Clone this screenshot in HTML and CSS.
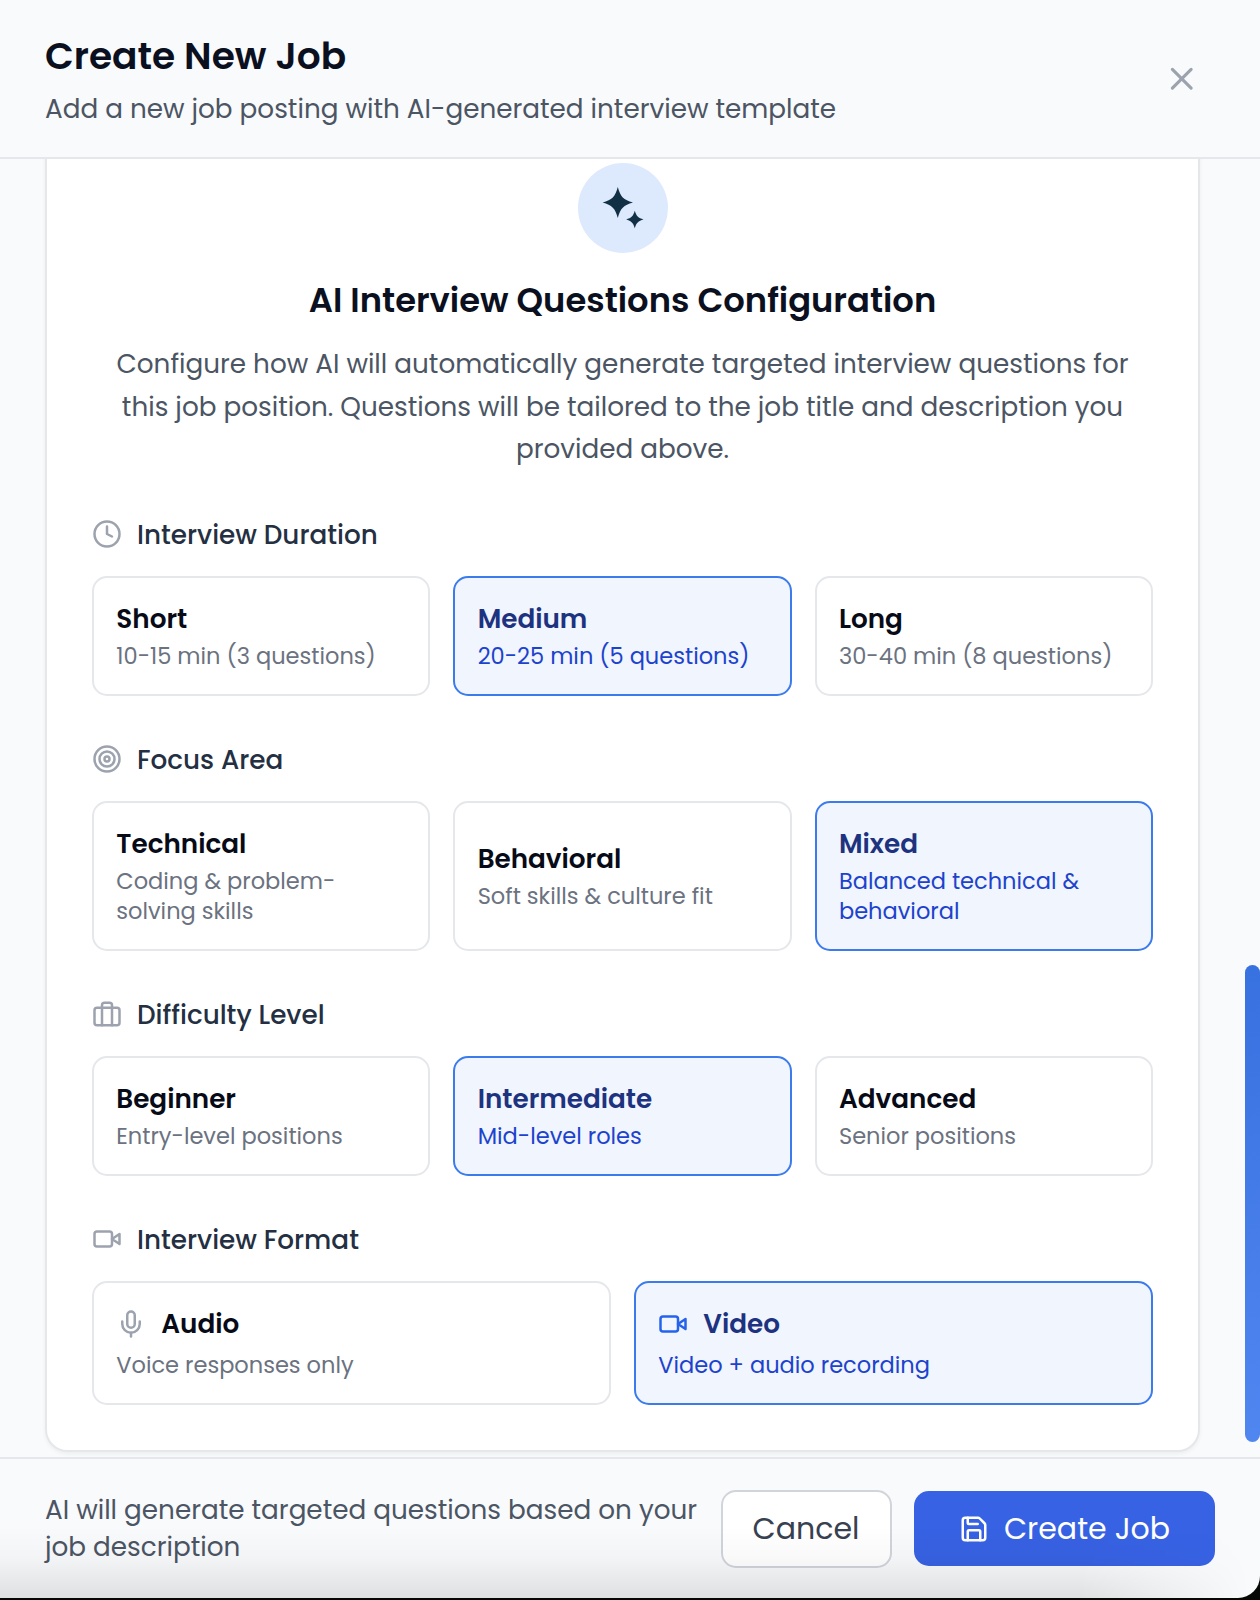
FILE: index.html
```html
<!DOCTYPE html>
<html lang="en">
<head>
<meta charset="utf-8">
<title>Create New Job</title>
<link rel="stylesheet" href="styles.css">
</head>
<body>
<div class="modal">
  <header class="modal-header">
    <div>
      <h1 class="modal-title">Create New Job</h1>
      <p class="modal-subtitle">Add a new job posting with AI-generated interview template</p>
    </div>
    <button class="close" aria-label="Close">
      <svg class="icon icon-lg" viewBox="0 0 24 24"><path d="M18 6 6 18"/><path d="m6 6 12 12"/></svg>
    </button>
  </header>

  <main class="modal-body">
    <section class="panel">
      <div class="intro">
        <div class="badge">
          <svg class="sparkles" viewBox="0 0 48 48"><path d="M18.8 3C21.3 12.5 24.5 16 34 18.5C24.5 21 21.3 24.5 18.8 34C16.3 24.5 13.1 21 3.6 18.5C13.1 16 16.3 12.5 18.8 3Z"/><path d="M35.8 26.8C37.3 32 39.3 34 44.5 35.5C39.3 37 37.3 39 35.8 44.2C34.3 39 32.3 37 27.1 35.5C32.3 34 34.3 32 35.8 26.8Z"/></svg>
        </div>
        <h2 class="intro-title">AI Interview Questions Configuration</h2>
        <p class="intro-text">Configure how AI will automatically generate targeted interview questions for<br>this job position. Questions will be tailored to the job title and description you<br>provided above.</p>
      </div>

      <div class="group">
        <h3 class="group-label">
          <svg class="icon" viewBox="0 0 24 24"><circle cx="12" cy="12" r="10"/><path d="M12 6v6l4 2"/></svg>
          <span>Interview Duration</span>
        </h3>
        <div class="options">
          <div class="option"><div class="name">Short</div><div class="desc">10-15 min (3 questions)</div></div>
          <div class="option selected"><div class="name">Medium</div><div class="desc">20-25 min (5 questions)</div></div>
          <div class="option"><div class="name">Long</div><div class="desc">30-40 min (8 questions)</div></div>
        </div>
      </div>

      <div class="group">
        <h3 class="group-label">
          <svg class="icon" viewBox="0 0 24 24"><circle cx="12" cy="12" r="10"/><circle cx="12" cy="12" r="6"/><circle cx="12" cy="12" r="2"/></svg>
          <span>Focus Area</span>
        </h3>
        <div class="options">
          <div class="option"><div class="name">Technical</div><div class="desc">Coding &amp; problem-<br>solving skills</div></div>
          <div class="option"><div class="name">Behavioral</div><div class="desc">Soft skills &amp; culture fit</div></div>
          <div class="option selected"><div class="name">Mixed</div><div class="desc">Balanced technical &amp;<br>behavioral</div></div>
        </div>
      </div>

      <div class="group">
        <h3 class="group-label">
          <svg class="icon" viewBox="0 0 24 24"><rect x="2" y="7" width="20" height="14" rx="2"/><path d="M16 21V5a2 2 0 0 0-2-2h-4a2 2 0 0 0-2 2v16"/></svg>
          <span>Difficulty Level</span>
        </h3>
        <div class="options">
          <div class="option"><div class="name">Beginner</div><div class="desc">Entry-level positions</div></div>
          <div class="option selected"><div class="name">Intermediate</div><div class="desc">Mid-level roles</div></div>
          <div class="option"><div class="name">Advanced</div><div class="desc">Senior positions</div></div>
        </div>
      </div>

      <div class="group">
        <h3 class="group-label">
          <svg class="icon" viewBox="0 0 24 24"><path d="m22 8-6 4 6 4V8Z"/><rect x="2" y="6" width="14" height="12" rx="2"/></svg>
          <span>Interview Format</span>
        </h3>
        <div class="options options-2">
          <div class="option option-media">
            <div class="name"><svg class="icon" viewBox="0 0 24 24"><path d="M12 2a3 3 0 0 0-3 3v7a3 3 0 0 0 6 0V5a3 3 0 0 0-3-3Z"/><path d="M19 10v2a7 7 0 0 1-14 0v-2"/><path d="M12 19v3"/></svg><span>Audio</span></div>
            <div class="desc">Voice responses only</div>
          </div>
          <div class="option option-media selected">
            <div class="name"><svg class="icon" viewBox="0 0 24 24"><path d="m22 8-6 4 6 4V8Z"/><rect x="2" y="6" width="14" height="12" rx="2"/></svg><span>Video</span></div>
            <div class="desc">Video + audio recording</div>
          </div>
        </div>
      </div>
    </section>
    <div class="scrollbar"><div class="thumb"></div></div>
  </main>

  <footer class="modal-footer">
    <p class="hint">AI will generate targeted questions based on your<br>job description</p>
    <div class="actions">
      <button class="btn btn-cancel"><span>Cancel</span></button>
      <button class="btn btn-primary">
        <svg class="icon" viewBox="0 0 24 24"><path d="M15.2 3a2 2 0 0 1 1.4.6l3.8 3.8a2 2 0 0 1 .6 1.4V19a2 2 0 0 1-2 2H5a2 2 0 0 1-2-2V5a2 2 0 0 1 2-2z"/><path d="M17 21v-7a1 1 0 0 0-1-1H8a1 1 0 0 0-1 1v7"/><path d="M7 3v4a1 1 0 0 0 1 1h7"/></svg>
        <span>Create Job</span>
      </button>
    </div>
  </footer>
</div>
</body>
</html>
```
FILE: styles.css
```css
* { box-sizing: border-box; margin: 0; padding: 0; }

html { font-size: 30px; }

body {
  height: 1600px;
  overflow: hidden;
  background: #050805;
  font-family: Poppins, Inter, "Open Sans", sans-serif;
  color: #0b1020;
}

button { font: inherit; border: 0; background: none; }

.icon {
  flex: none;
  width: 1rem;
  height: 1rem;
  fill: none;
  stroke: currentColor;
  stroke-width: 2;
  stroke-linecap: round;
  stroke-linejoin: round;
}
.icon-lg { width: 1.25rem; height: 1.25rem; }

.modal {
  position: relative;
  display: flex;
  flex-direction: column;
  height: 1598px;
  background: #f9fafc;
  border-bottom-right-radius: 22px;
  overflow: hidden;
}

.modal-header {
  flex: none;
  display: flex;
  align-items: center;
  justify-content: space-between;
  height: 159px;
  padding: 0 1.5rem;
  border-bottom: 2px solid #e5e7eb;
}
.modal-title { font-size: 37.5px; line-height: 52.5px; font-weight: 600; }
.modal-subtitle { margin-top: 7px; font-size: 26.25px; line-height: 37.5px; color: #4b5563; }
.close { display: flex; padding: .5rem; color: #9ca3af; }

.modal-body {
  flex: 1;
  min-height: 0;
  display: flex;
  align-items: flex-end;
  justify-content: space-between;
  overflow: hidden;
}

.panel {
  flex: none;
  width: 1155px;
  margin: 0 0 5px 45px;
  padding: 45px;
  background: #fff;
  border: 2px solid #e5e7eb;
  border-radius: 22.5px;
  box-shadow: 0 2px 4px rgba(0, 0, 0, .05);
}

.intro { display: flex; flex-direction: column; align-items: center; text-align: center; }
.badge {
  display: flex;
  align-items: center;
  justify-content: center;
  width: 3rem;
  height: 3rem;
  border-radius: 50%;
  background: #dde9fc;
}
.sparkles { width: 48px; height: 48px; fill: #112f45; }
.intro-title { margin-top: .75rem; font-size: 33.75px; line-height: 52.5px; font-weight: 600; }
.intro-text { margin-top: 15.5px; font-size: 26.25px; line-height: 42.6px; color: #4b5563; white-space: nowrap; }

.group { margin-top: 44.5px; }
.group-label {
  display: flex;
  align-items: center;
  gap: .5rem;
  font-size: 26.25px;
  line-height: 37.5px;
  font-weight: 500;
  color: #243042;
}
.group-label .icon { color: #9ca3af; }

.options { display: grid; grid-template-columns: repeat(3, 1fr); gap: 23px; margin-top: 23px; }
.options-2 { grid-template-columns: repeat(2, 1fr); }

.option {
  display: flex;
  flex-direction: column;
  justify-content: center;
  gap: 3.75px;
  padding: 22px 22.3px 22.8px;
  border: 2px solid #e5e7eb;
  border-radius: 15px;
}
.name {
  display: flex;
  align-items: center;
  gap: .5rem;
  font-size: 26.25px;
  line-height: 37.5px;
  font-weight: 600;
  color: #070b18;
}
.desc { font-size: 22.5px; line-height: 30px; color: #6b7280; white-space: nowrap; }
.option-media { gap: 7.5px; }
.option-media .icon { color: #9ca3af; }

.selected { border-color: #3b7bec; background: #f0f5fe; }
.selected .name { color: #1e3380; }
.selected .desc { color: #1d43cd; }
.selected .icon { color: #2563eb; }

.scrollbar { align-self: stretch; width: 15px; display: flex; flex-direction: column; justify-content: flex-end; padding-bottom: 15px; }
.thumb { height: 477px; border-radius: 8px; background: linear-gradient(#3871e0, #5086f0); }

.modal-footer {
  flex: none;
  display: flex;
  align-items: center;
  justify-content: space-between;
  height: 141px;
  padding: 0 1.5rem;
  border-top: 2px solid #e5e7eb;
}
.hint { margin-bottom: 1px; font-size: 26.25px; line-height: 37.5px; color: #4b5563; white-space: nowrap; }
.actions { display: flex; align-items: center; gap: .75rem; }
.btn {
  display: flex;
  align-items: center;
  justify-content: center;
  gap: .5rem;
  height: 75px;
  font-size: 30px;
  line-height: 45px;
  border-radius: 15px;
}
.btn-cancel { width: 171px; height: 78px; border: 2px solid #d1d5db; background: #fff; color: #374151; }
.btn-primary { width: 301px; background: #3762e3; color: #fff; }

/* shade cast along the bottom edge, fading out towards the right corner */
.modal::after {
  content: "";
  position: absolute;
  left: 0;
  right: 0;
  bottom: 0;
  height: 72px;
  background: linear-gradient(transparent, rgba(0, 0, 0, .025) 45%, rgba(0, 0, 0, .1));
  -webkit-mask-image: linear-gradient(to right, #000 1080px, transparent 1250px);
  mask-image: linear-gradient(to right, #000 1080px, transparent 1250px);
  pointer-events: none;
}
```
